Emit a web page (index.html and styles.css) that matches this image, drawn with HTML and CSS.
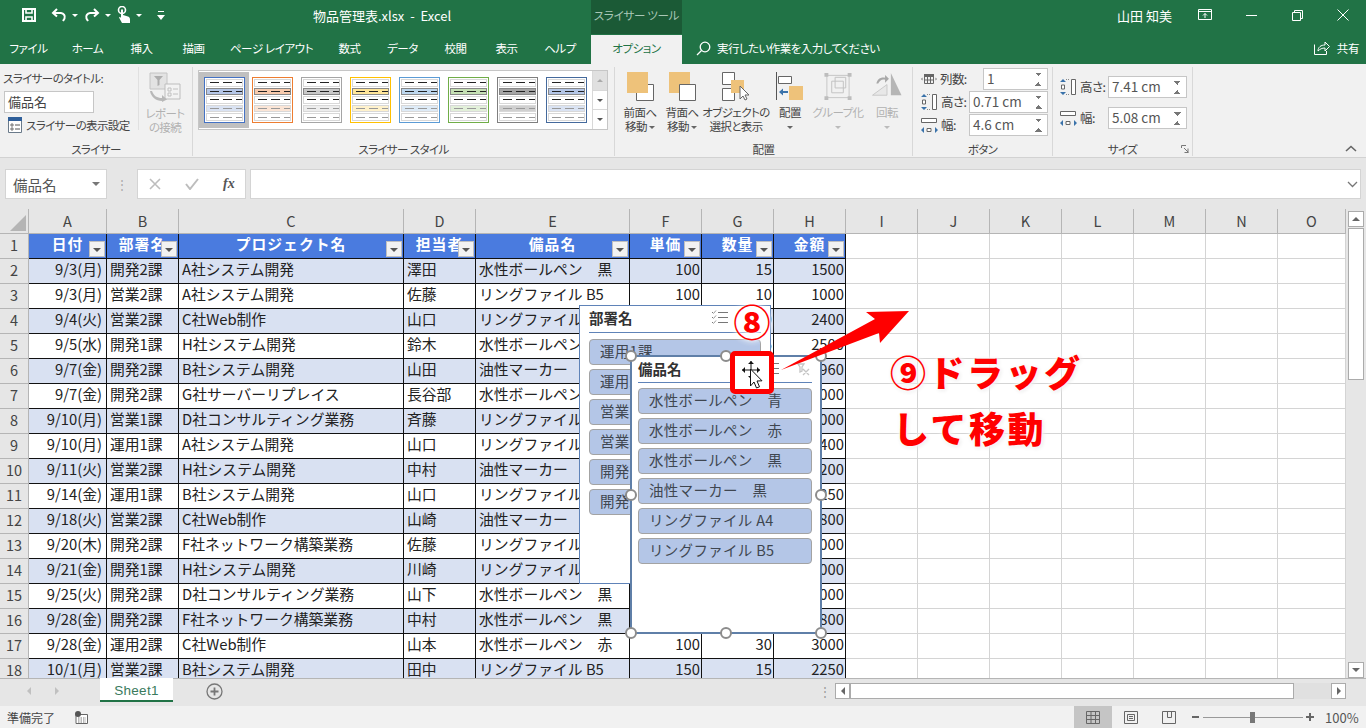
FILE: index.html
```html
<!DOCTYPE html>
<html lang="ja">
<head>
  <meta charset="UTF-8" />
  <title>物品管理表.xlsx - Excel</title>
  <link rel="stylesheet" href="styles.css">
</head>
<body>

  <!-- Title bar -->
  <header class="titlebar">
    <div class="qat">
      <svg class="q-save" width="16" height="16" viewBox="0 0 16 16" fill="none" stroke="#fff" stroke-width="2"><path d="M2 2h12v12H2z"/><path d="M5 2v4h6V2M5 14V10h6v4" stroke-width="1.6"/></svg>
      <svg class="q-undo" width="16" height="14" viewBox="0 0 16 14" fill="none" stroke="#fff" stroke-width="2"><path d="M6 1 2 5l4 3.500"/><path d="M2.500 5H10a4 4 0 0 1 3.500 5.500L12 13"/></svg>
      <i class="q-drop"></i>
      <svg class="q-redo" width="16" height="14" viewBox="0 0 16 14" fill="none" stroke="#fff" stroke-width="2"><path d="M10 1l4 4-4 3.500"/><path d="M13.500 5H6a4 4 0 0 0-3.500 5.500L4 13"/></svg>
      <i class="q-drop"></i>
      <svg class="q-touch" width="14" height="18" viewBox="0 0 14 18" fill="#fff"><circle cx="5" cy="4" r="3.500" fill="none" stroke="#fff" stroke-width="1.600"/><path d="M4 3.500h2V9l5 1.500c1.500.5 2 1.500 2 3V17H5L2 11.500l1-.8L4 12z"/></svg>
      <i class="q-drop"></i>
      <svg class="q-more" width="8" height="9" viewBox="0 0 8 9" fill="#fff"><path d="M1 0h6v1H1zM0 4h8L4 9z"/></svg>
    </div>
    <div class="doc-title">物品管理表.xlsx&nbsp; - &nbsp;Excel</div>
    <div class="context-title">スライサー ツール</div>
    <div class="user-name">山田 知美</div>
    <div class="win-btns">
      <svg width="14" height="12" viewBox="0 0 14 12" fill="none" stroke="#fff"><path d="M.5.500h13v10H.5zM.5 2.500h13M7 9V4.500M5 6.500l2-2 2 2"/></svg>
      <svg width="11" height="12" viewBox="0 0 11 12" fill="none" stroke="#fff"><path d="M0 6.500h11"/></svg>
      <svg width="11" height="11" viewBox="0 0 11 11" fill="none" stroke="#fff"><path d="M.5 2.500h8v8h-8zM2.500 2.500v-2h8v8h-2"/></svg>
      <svg width="12" height="12" viewBox="0 0 12 12" fill="none" stroke="#fff"><path d="M.5.500l11 11M11.500.500l-11 11"/></svg>
    </div>
  </header>

  <!-- Ribbon tabs -->
  <nav class="tabs">
    <span class="tab t-file">ファイル</span>
    <span class="tab t-home">ホーム</span>
    <span class="tab t-ins">挿入</span>
    <span class="tab t-draw">描画</span>
    <span class="tab t-page">ページ レイアウト</span>
    <span class="tab t-calc">数式</span>
    <span class="tab t-data">データ</span>
    <span class="tab t-rev">校閲</span>
    <span class="tab t-view">表示</span>
    <span class="tab t-help">ヘルプ</span>
    <span class="tab tab-active">オプション</span>
    <div class="tell-me">
      <svg width="15" height="15" viewBox="0 0 15 15" fill="none" stroke="#fff" stroke-width="1.300"><circle cx="9" cy="6" r="4.800"/><path d="M5.500 9.500 1 14"/></svg>
      <span>実行したい作業を入力してください</span>
    </div>
    <div class="share">
      <svg width="16" height="14" viewBox="0 0 16 14" fill="none" stroke="#fff"><path d="M.5 3.500v10h12V10M4 10c0-4 3-6 7-6V1l4.500 4.500L11 10V7C8 7 6 8 4 10z"/></svg>
      <span>共有</span>
    </div>
  </nav>

  <!-- Ribbon -->
  <section class="ribbon">
    <div class="rgroup g-slicer">
      <div class="rbody">
        <div class="caption-col">
          <div class="cap-label">スライサーのタイトル:</div>
          <div class="cap-input">備品名</div>
          <div class="cap-setting">
            <svg width="14" height="16" viewBox="0 0 14 16" fill="none"><path d="M.5.500h13v15H.5z" fill="#fff" stroke="#6a7a8a"/><path d="M0 0h14v4H0z" fill="#2f5f9a"/><path d="M3 7h2v2H3zM3 11h2v2H3z" stroke="#555" stroke-width=".8"/><path d="M7 8h5M7 12h5" stroke="#555"/></svg>
            <span>スライサーの表示設定</span>
          </div>
        </div>
        <div class="report-btn">
          <svg width="32" height="30" viewBox="0 0 32 30" fill="none"><path d="M1 1h17v16H1z" fill="#e3e3e3" stroke="#c4c4c4"/><path d="M5 4h9l-3.500 4v5l-2 1V8z" fill="#adadad"/><path d="M16 12h15v15H16z" fill="#f3f3f3" stroke="#bdbdbd"/><path d="M19 16h3v3h-3zM19 21h3v3h-3zM24 17h5M24 22h5" stroke="#c0c0c0"/><path d="M3 19c2 5 5 7 10 7v-3l5 4.500-5 2.500v-1C7 29 2 25 1 19z" fill="#b8b8b8"/></svg>
          <span>レポート<br>の接続</span>
        </div>
      </div>
      <div class="rlabel">スライサー</div>
    </div>

    <div class="rgroup g-style">
      <div class="rbody">
        <div class="gallery">
          <div class="gallery-items">
            <div class="thumb-sel"><div class="thumb th-blue"><span></span><span class="fill"></span><span></span><span class="pale"></span><span class="last"></span></div></div>
            <div class="thumb th-orange"><span></span><span class="fill"></span><span></span><span class="pale"></span><span class="last"></span></div>
            <div class="thumb th-gray"><span></span><span class="fill"></span><span></span><span class="pale"></span><span class="last"></span></div>
            <div class="thumb th-yellow"><span></span><span class="fill"></span><span></span><span class="pale"></span><span class="last"></span></div>
            <div class="thumb th-sky"><span></span><span class="fill"></span><span></span><span class="pale"></span><span class="last"></span></div>
            <div class="thumb th-green"><span></span><span class="fill"></span><span></span><span class="pale"></span><span class="last"></span></div>
            <div class="thumb th-dark"><span></span><span class="fill"></span><span></span><span class="pale"></span><span class="last"></span></div>
            <div class="thumb th-navy"><span></span><span class="fill"></span><span></span><span class="pale"></span><span class="last"></span></div>
          </div>
          <div class="gallery-scroll">
            <b class="gs-up"><i></i></b>
            <b><i></i></b>
            <b class="gs-more"><i></i></b>
          </div>
        </div>
      </div>
      <div class="rlabel">スライサー スタイル</div>
    </div>

    <div class="rgroup g-arrange">
      <div class="rbody">
        <div class="rbtn w42">
          <svg width="27" height="29" viewBox="0 0 27 29"><path d="M9.500 12.500h17v16h-17z" fill="#fff" stroke="#666"/><path d="M0 0h21v21H0z" fill="#eec27a"/></svg>
          <span>前面へ<br>移動 <i class="drop"></i></span>
        </div>
        <div class="rbtn w42">
          <svg width="27" height="29" viewBox="0 0 27 29"><path d="M0 0h21v21H0z" fill="#eec27a"/><path d="M10.500 12.500h16v16h-16z" fill="#fff" stroke="#666"/></svg>
          <span>背面へ<br>移動 <i class="drop"></i></span>
        </div>
        <div class="rbtn w66">
          <svg width="28" height="29" viewBox="0 0 28 29"><path d="M.5.500h12v12H.5zM.5 16.500h12v12H.5z" fill="#fff" stroke="#666"/><path d="M9 8h13v13H9z" fill="#eec27a"/><path d="M18 14v13l3-3 2 4 2-1-2-4h4z" fill="#fff" stroke="#666"/></svg>
          <span>オブジェクトの<br>選択と表示</span>
        </div>
        <div class="rbtn w42">
          <svg width="28" height="29" viewBox="0 0 28 29"><path d="M.5 0v28" stroke="#555"/><path d="M2.500 4.500h13v7h-13z" fill="#fff" stroke="#666"/><path d="M13 14h14v14H13z" fill="#eec27a"/><path d="M3 20l4-3.500V19h5v2H7v2.500z" fill="#3a72aa"/></svg>
          <span>配置<br><i class="drop"></i></span>
        </div>
        <div class="rbtn w54 off">
          <svg width="30" height="29" viewBox="0 0 30 30" fill="none" stroke="#c6c6c6"><path d="M3.500 3.500h23v23h-23z"/><path d="M8.500 9.500h12v12h-12zM12 5.500h11v11H12z" stroke="#c2c2c2"/><path d="M1 1h4v4H1zM25 1h4v4h-4zM1 25h4v4H1zM25 25h4v4h-4z" fill="#bdbdbd" stroke="none"/></svg>
          <span>グループ化<br><i class="drop"></i></span>
        </div>
        <div class="rbtn w44 off">
          <svg width="32" height="29" viewBox="0 0 32 30"><path d="M1 24 16 13v11z" fill="#e8e8e8" stroke="#c8c8c8"/><path d="M20 1l11 23H20z" fill="#b5b5b5"/><path d="M5 12c1-5 5-7 9-6V3l4 4-4 4V8c-3-1-6 1-7 4z" fill="#a8a8a8"/></svg>
          <span>回転<br><i class="drop"></i></span>
        </div>
      </div>
      <div class="rlabel">配置</div>
    </div>

    <div class="rgroup g-button">
      <div class="rbody field-rows">
        <div class="field f-cols">
          <svg width="16" height="10" viewBox="0 0 16 10" fill="none"><path d="M0 5l1.500-1.500v3zM16 5l-1.500-1.500v3z" fill="#777"/><path d="M3.500.500h9v9h-9z" stroke="#666"/><path d="M3 0h10v3H3z" fill="#666"/><path d="M6.500 3v6M9.500 3v6M3 6h10" stroke="#666"/></svg>
          <label>列数:</label>
          <div class="spin s-cols"><span>1</span><em></em></div>
        </div>
        <div class="field">
          <svg class="ic-h" width="17" height="16" viewBox="0 0 17 16"><path d="M11.500.500h4v15h-4z" fill="#fff" stroke="#666"/><path d="M3 0l3 3H0zM3 16l3-3H0z" fill="#3a72aa"/><path d="M1.500 6h3v4h-3z" fill="#fff" stroke="#666"/><path d="M6 .500h4M6 15.500h4" stroke="#888" stroke-dasharray="1 1"/></svg>
          <label>高さ:</label>
          <div class="spin"><span>0.71 cm</span><em></em></div>
        </div>
        <div class="field">
          <svg class="ic-w" width="17" height="15" viewBox="0 0 17 15"><path d="M.5.500h15v4h-15z" fill="#fff" stroke="#666"/><path d="M0 12l3-3v6zM17 12l-3-3v6z" fill="#3a72aa"/><path d="M6 10.500h4v3H6z" fill="#fff" stroke="#666"/></svg>
          <label>幅:</label>
          <div class="spin"><span>4.6 cm</span><em></em></div>
        </div>
      </div>
      <div class="rlabel">ボタン</div>
    </div>

    <div class="rgroup g-size">
      <div class="rbody size-rows">
        <div class="field">
          <svg class="ic-h" width="17" height="16" viewBox="0 0 17 16"><path d="M11.500.500h4v15h-4z" fill="#fff" stroke="#666"/><path d="M3 0l3 3H0zM3 16l3-3H0z" fill="#3a72aa"/><path d="M1.500 6h3v4h-3z" fill="#fff" stroke="#666"/><path d="M6 .500h4M6 15.500h4" stroke="#888" stroke-dasharray="1 1"/></svg>
          <label>高さ:</label>
          <div class="spin"><span>7.41 cm</span><em></em></div>
        </div>
        <div class="field">
          <svg class="ic-w" width="17" height="15" viewBox="0 0 17 15"><path d="M.5.500h15v4h-15z" fill="#fff" stroke="#666"/><path d="M0 12l3-3v6zM17 12l-3-3v6z" fill="#3a72aa"/><path d="M6 10.500h4v3H6z" fill="#fff" stroke="#666"/></svg>
          <label>幅:</label>
          <div class="spin"><span>5.08 cm</span><em></em></div>
        </div>
      </div>
      <div class="rlabel">サイズ
        <svg class="launcher" width="8" height="8" viewBox="0 0 8 8" fill="none" stroke="#777"><path d="M.5 3V.5H5M7.500 7.500 3 3M7 3.500V7.500H3.500"/></svg>
      </div>
    </div>

    <svg class="collapse" width="12" height="7" viewBox="0 0 12 7" fill="none" stroke="#666" stroke-width="1.600"><path d="M1 6l5-4.500L11 6"/></svg>
  </section>

  <!-- Formula bar -->
  <section class="formula">
    <div class="name-box"><span>備品名</span><i></i></div>
    <div class="fx-grip">⋮</div>
    <div class="fx-btns">
      <svg width="12" height="12" viewBox="0 0 12 12" fill="none" stroke="#bdbdbd" stroke-width="1.600"><path d="M1 1l10 10M11 1 1 11"/></svg>
      <svg width="14" height="12" viewBox="0 0 14 12" fill="none" stroke="#bdbdbd" stroke-width="2"><path d="M1 6l4 5 8-10"/></svg>
      <em>fx</em>
    </div>
    <div class="fx-input"><svg width="11" height="7" viewBox="0 0 11 7" fill="none" stroke="#777" stroke-width="1.300"><path d="M1 1l4.500 4.500L10 1"/></svg></div>
  </section>

  <!-- Sheet -->
  <main class="sheet">
    <div class="grid">
      <table class="cells">
        <colgroup>
          <col class="c-rh"><col class="c-a"><col class="c-n"><col class="c-c"><col class="c-n"><col class="c-e"><col class="c-n"><col class="c-n"><col class="c-n"><col class="c-n"><col class="c-n"><col class="c-n"><col class="c-n"><col class="c-n"><col class="c-n"><col class="c-o">
        </colgroup>
        <thead>
          <tr><th class="corner"><i></i></th><th>A</th><th>B</th><th>C</th><th>D</th><th>E</th><th>F</th><th>G</th><th>H</th><th>I</th><th>J</th><th>K</th><th>L</th><th>M</th><th>N</th><th>O</th></tr>
        </thead>
        <tbody>
          <tr class="head"><th>1</th><td>日付<i></i></td><td>部署名<i></i></td><td>プロジェクト名<i></i></td><td>担当者<i></i></td><td>備品名<i></i></td><td>単価<i></i></td><td>数量<i></i></td><td>金額<i></i></td><td class="e"></td><td class="e"></td><td class="e"></td><td class="e"></td><td class="e"></td><td class="e"></td><td class="e"></td></tr>
          <tr class="odd"><th>2</th><td class="d">9/3(月)</td><td>開発2課</td><td>A社システム開発</td><td>澤田</td><td>水性ボールペン　黒</td><td class="r">100</td><td class="r">15</td><td class="r">1500</td><td class="e"></td><td class="e"></td><td class="e"></td><td class="e"></td><td class="e"></td><td class="e"></td><td class="e"></td></tr>
          <tr><th>3</th><td class="d">9/3(月)</td><td>営業2課</td><td>A社システム開発</td><td>佐藤</td><td>リングファイル B5</td><td class="r">100</td><td class="r">10</td><td class="r">1000</td><td class="e"></td><td class="e"></td><td class="e"></td><td class="e"></td><td class="e"></td><td class="e"></td><td class="e"></td></tr>
          <tr class="odd"><th>4</th><td class="d">9/4(火)</td><td>営業2課</td><td>C社Web制作</td><td>山口</td><td>リングファイル A4</td><td class="r">120</td><td class="r">20</td><td class="r">2400</td><td class="e"></td><td class="e"></td><td class="e"></td><td class="e"></td><td class="e"></td><td class="e"></td><td class="e"></td></tr>
          <tr><th>5</th><td class="d">9/5(水)</td><td>開発1課</td><td>H社システム開発</td><td>鈴木</td><td>水性ボールペン　青</td><td class="r">100</td><td class="r">25</td><td class="r">2500</td><td class="e"></td><td class="e"></td><td class="e"></td><td class="e"></td><td class="e"></td><td class="e"></td><td class="e"></td></tr>
          <tr class="odd"><th>6</th><td class="d">9/7(金)</td><td>開発2課</td><td>B社システム開発</td><td>山田</td><td>油性マーカー　黒</td><td class="r">120</td><td class="r">8</td><td class="r">960</td><td class="e"></td><td class="e"></td><td class="e"></td><td class="e"></td><td class="e"></td><td class="e"></td><td class="e"></td></tr>
          <tr><th>7</th><td class="d">9/7(金)</td><td>開発2課</td><td>G社サーバーリプレイス</td><td>長谷部</td><td>水性ボールペン　赤</td><td class="r">100</td><td class="r">30</td><td class="r">3000</td><td class="e"></td><td class="e"></td><td class="e"></td><td class="e"></td><td class="e"></td><td class="e"></td><td class="e"></td></tr>
          <tr class="odd"><th>8</th><td class="d">9/10(月)</td><td>営業1課</td><td>D社コンサルティング業務</td><td>斉藤</td><td>リングファイル A4</td><td class="r">100</td><td class="r">20</td><td class="r">2000</td><td class="e"></td><td class="e"></td><td class="e"></td><td class="e"></td><td class="e"></td><td class="e"></td><td class="e"></td></tr>
          <tr><th>9</th><td class="d">9/10(月)</td><td>運用1課</td><td>A社システム開発</td><td>山口</td><td>リングファイル B5</td><td class="r">120</td><td class="r">20</td><td class="r">2400</td><td class="e"></td><td class="e"></td><td class="e"></td><td class="e"></td><td class="e"></td><td class="e"></td><td class="e"></td></tr>
          <tr class="odd"><th>10</th><td class="d">9/11(火)</td><td>営業2課</td><td>H社システム開発</td><td>中村</td><td>油性マーカー　黒</td><td class="r">120</td><td class="r">10</td><td class="r">1200</td><td class="e"></td><td class="e"></td><td class="e"></td><td class="e"></td><td class="e"></td><td class="e"></td><td class="e"></td></tr>
          <tr><th>11</th><td class="d">9/14(金)</td><td>運用1課</td><td>B社システム開発</td><td>山口</td><td>リングファイル A4</td><td class="r">150</td><td class="r">15</td><td class="r">2250</td><td class="e"></td><td class="e"></td><td class="e"></td><td class="e"></td><td class="e"></td><td class="e"></td><td class="e"></td></tr>
          <tr class="odd"><th>12</th><td class="d">9/18(火)</td><td>営業2課</td><td>C社Web制作</td><td>山崎</td><td>油性マーカー　黒</td><td class="r">120</td><td class="r">15</td><td class="r">1800</td><td class="e"></td><td class="e"></td><td class="e"></td><td class="e"></td><td class="e"></td><td class="e"></td><td class="e"></td></tr>
          <tr><th>13</th><td class="d">9/20(木)</td><td>開発2課</td><td>F社ネットワーク構築業務</td><td>佐藤</td><td>リングファイル B5</td><td class="r">100</td><td class="r">20</td><td class="r">2000</td><td class="e"></td><td class="e"></td><td class="e"></td><td class="e"></td><td class="e"></td><td class="e"></td><td class="e"></td></tr>
          <tr class="odd"><th>14</th><td class="d">9/21(金)</td><td>開発1課</td><td>H社システム開発</td><td>川崎</td><td>リングファイル A4</td><td class="r">100</td><td class="r">30</td><td class="r">3000</td><td class="e"></td><td class="e"></td><td class="e"></td><td class="e"></td><td class="e"></td><td class="e"></td><td class="e"></td></tr>
          <tr><th>15</th><td class="d">9/25(火)</td><td>開発2課</td><td>D社コンサルティング業務</td><td>山下</td><td>水性ボールペン　黒</td><td class="r">100</td><td class="r">30</td><td class="r">3000</td><td class="e"></td><td class="e"></td><td class="e"></td><td class="e"></td><td class="e"></td><td class="e"></td><td class="e"></td></tr>
          <tr class="odd"><th>16</th><td class="d">9/28(金)</td><td>開発2課</td><td>F社ネットワーク構築業務</td><td>中村</td><td>水性ボールペン　黒</td><td class="r">120</td><td class="r">15</td><td class="r">1800</td><td class="e"></td><td class="e"></td><td class="e"></td><td class="e"></td><td class="e"></td><td class="e"></td><td class="e"></td></tr>
          <tr><th>17</th><td class="d">9/28(金)</td><td>運用2課</td><td>C社Web制作</td><td>山本</td><td>水性ボールペン　赤</td><td class="r">100</td><td class="r">30</td><td class="r">3000</td><td class="e"></td><td class="e"></td><td class="e"></td><td class="e"></td><td class="e"></td><td class="e"></td><td class="e"></td></tr>
          <tr class="odd"><th>18</th><td class="d">10/1(月)</td><td>営業2課</td><td>B社システム開発</td><td>田中</td><td>リングファイル B5</td><td class="r">150</td><td class="r">15</td><td class="r">2250</td><td class="e"></td><td class="e"></td><td class="e"></td><td class="e"></td><td class="e"></td><td class="e"></td><td class="e"></td></tr>
        </tbody>
      </table>

      <!-- Slicers lying over the cells -->
      <div class="slicer sl-dept">
        <div class="sl-head"><span>部署名</span>
          <svg class="sl-multi" width="17" height="15" viewBox="0 0 17 15" fill="none" stroke="#777"><path d="M1 2l1.500 1.500L5 .5M1 7l1.500 1.500L5 5.500M1 12l1.500 1.500L5 10.500" stroke-dasharray="1.500 .7"/><path d="M7 2.500h10M7 7.500h10M7 12.500h10"/></svg>
        </div>
        <div class="sl-item">運用1課</div>
        <div class="sl-item">運用2課</div>
        <div class="sl-item">営業1課</div>
        <div class="sl-item">営業2課</div>
        <div class="sl-item">開発1課</div>
        <div class="sl-item">開発2課</div>
      </div>

      <div class="slicer sl-item-name">
        <div class="sl-head"><span>備品名</span>
          <svg class="sl-multi2" width="17" height="15" viewBox="0 0 17 15" fill="none" stroke="#777"><path d="M1 2l1.500 1.500L5 .5M1 7l1.500 1.500L5 5.500M1 12l1.500 1.500L5 10.500" stroke-dasharray="1.500 .7"/><path d="M7 2.500h10M7 7.500h10M7 12.500h10"/></svg>
          <svg class="sl-clear" width="13" height="13" viewBox="0 0 13 13" fill="none" stroke="#c4c4c4" stroke-width="1.300"><path d="M1 1h6L5 4v4L3 9V4zM6 6l6 6M12 6l-6 6"/></svg>
        </div>
        <div class="sl-item">水性ボールペン　青</div>
        <div class="sl-item">水性ボールペン　赤</div>
        <div class="sl-item">水性ボールペン　黒</div>
        <div class="sl-item">油性マーカー　黒</div>
        <div class="sl-item">リングファイル A4</div>
        <div class="sl-item">リングファイル B5</div>
        <i class="hd h-tl"></i><i class="hd h-tc"></i><i class="hd h-tr"></i>
        <i class="hd h-ml"></i><i class="hd h-mr"></i>
        <i class="hd h-bl"></i><i class="hd h-bc"></i><i class="hd h-br"></i>
      </div>

      <!-- Callouts -->
      <div class="mark8">⑧</div>
      <svg class="red-arrow" width="132" height="66" viewBox="0 0 132 66"><path d="M2 61 96 10 87 3 130 2 101 34 100 24z" fill="#f00"/></svg>
      <div class="red-box">
        <svg width="34" height="33" viewBox="0 0 34 33">
          <path d="M16 5v18M7 14h18" stroke="#111" fill="none"/>
          <path d="M16 5l3 3h-6zM16 23l3-3h-6zM7 14l3-3v6zM25 14l-3-3v6z" fill="#111"/>
          <path d="M15.500 13v17l3.500-4 2.500 6 3-1.200-2.500-5.800 5-.2z" fill="#fff" stroke="#111"/>
        </svg>
      </div>
      <div class="note note-1">⑨ドラッグ</div>
      <div class="note note-2">して移動</div>
    </div>

    <aside class="vscroll">
      <b class="vs-btn"><i class="up"></i></b>
      <div class="vs-track"><div class="vs-thumb"></div></div>
      <b class="vs-btn"><i class="down"></i></b>
    </aside>
  </main>

  <!-- Sheet tabs -->
  <section class="tabbar">
    <div class="sheet-nav"><i class="left"></i><i class="right"></i></div>
    <div class="sheet-tab">Sheet1</div>
    <div class="sheet-add">
      <svg width="17" height="17" viewBox="0 0 17 17" fill="none" stroke="#777"><circle cx="8.500" cy="8.500" r="7.500" stroke-width="1.300"/><path d="M8.500 4.500v8M4.500 8.500h8" stroke-width="1.800"/></svg>
    </div>
    <div class="h-dots">⋮</div>
    <div class="hscroll">
      <b class="hs-btn"><i class="left"></i></b>
      <div class="hs-track"><div class="hs-thumb"></div></div>
      <b class="hs-btn"><i class="right"></i></b>
    </div>
  </section>

  <!-- Status bar -->
  <footer class="status">
    <span class="ready">準備完了</span>
    <svg class="macro" width="13" height="13" viewBox="0 0 13 13" fill="none"><path d="M1 3.500h11.500v9H1z" fill="#fff" stroke="#666"/><circle cx="3" cy="3" r="3" fill="#555"/><path d="M3 7h8M3 9h8M3 11h8" stroke="#777" stroke-dasharray="1.500 1"/></svg>
    <div class="views">
      <div class="view view-on"><svg width="14" height="13" viewBox="0 0 14 13" fill="none" stroke="#666"><path d="M.5.500h13v12H.5zM.5 4.500h13M.5 8.500h13M5 .5v12M9.500.5v12"/></svg></div>
      <div class="view"><svg width="14" height="13" viewBox="0 0 14 13" fill="none" stroke="#666"><path d="M.5.500h13v12H.5zM3.500 3.500h7v6h-7zM5 5.500h4M5 7.500h4"/></svg></div>
      <div class="view"><svg width="14" height="13" viewBox="0 0 14 13" fill="none" stroke="#666"><path d="M.5.500h13v12H.5zM5.500.5v6h4v-6"/></svg></div>
    </div>
    <div class="zoom-ctl">
      <i class="z-minus"></i>
      <div class="z-track"><i class="z-knob"></i></div>
      <i class="z-plus"></i>
    </div>
    <span class="zoom-val">100%</span>
  </footer>

</body>
</html>
```

FILE: styles.css
```css
* {
  margin: 0;
  padding: 0;
  box-sizing: border-box;
}

html, body {
  width: 1366px;
  height: 728px;
  overflow: hidden;
  font-family: "Noto Sans CJK JP", "Noto Sans", sans-serif;
  font-size: 12px;
  color: #444;
  background: #f1f1f1;
}

body {
  display: flex;
  flex-direction: column;
}

i {
  font-style: normal;
}

/* Title bar */
.titlebar {
  height: 35px;
  flex: none;
  display: flex;
  align-items: center;
  padding-bottom: 5px;
  background: #217346;
  color: #fff;
  font-feature-settings: "palt";
}

.qat {
  width: 313px;
  flex: none;
  display: flex;
  align-items: center;
  padding-left: 21px;
}

.q-undo { margin-left: 14px; }
.q-redo { margin-left: 6px; }
.q-touch { margin-left: 6px; }
.q-more { margin-left: 15px; }

.q-drop {
  margin-left: 5px;
  border-left: 3px solid transparent;
  border-right: 3px solid transparent;
  border-top: 3px solid #fff;
}

.doc-title {
  width: 278px;
  font-size: 13px;
}

.context-title {
  width: 91px;
  height: 34px;
  align-self: flex-start;
  background: #1b5a36;
  color: #a9c7b6;
  font-size: 11.500px;
  letter-spacing: -.3px;
  text-align: center;
  line-height: 31px;
  white-space: nowrap;
}

.user-name {
  margin-left: auto;
  font-size: 13px;
}

.win-btns {
  width: 194px;
  display: flex;
  align-items: center;
  justify-content: space-between;
  padding: 0 17px 0 26px;
}

/* Ribbon tabs */
.tabs {
  height: 29px;
  flex: none;
  display: flex;
  align-items: center;
  background: #217346;
  color: #fff;
  font-size: 11.500px;
  letter-spacing: -.4px;
  font-feature-settings: "palt";
}

.tab {
  text-align: center;
  line-height: 26px;
  height: 29px;
  white-space: nowrap;
}

.t-file { width: 57px; }
.t-home { width: 61px; }
.t-ins { width: 47px; }
.t-draw { width: 57px; }
.t-page { width: 99px; }
.t-calc { width: 57px; }
.t-data { width: 49px; }
.t-rev { width: 57px; }
.t-view { width: 45px; }
.t-help { width: 62px; }

.tab-active {
  width: 91px;
  background: #f1f1f1;
  color: #217346;
}

.tell-me {
  display: flex;
  align-items: center;
  gap: 6px;
  height: 26px;
  margin: 0 0 3px 14px;
  color: #fff;
  letter-spacing: -.55px;
}

.share {
  margin: 0 7px 3px auto;
  display: flex;
  align-items: center;
  gap: 7px;
}

/* Ribbon */
.ribbon {
  height: 94px;
  flex: none;
  position: relative;
  display: flex;
  background: #f1f1f1;
  border-bottom: 1px solid #d2d2d2;
  font-size: 11.500px;
  letter-spacing: -.6px;
  font-feature-settings: "palt";
}

.rgroup {
  display: flex;
  flex-direction: column;
  position: relative;
  height: 89px;
  margin-top: 3px;
  border-right: 1px solid #d8d8d8;
}

.rbody {
  height: 73px;
  flex: none;
  display: flex;
}

.rlabel {
  height: 16px;
  text-align: center;
  line-height: 18px;
  color: #444;
}

.g-slicer { width: 193px; }
.g-style { width: 422px; }
.g-arrange { width: 298px; }
.g-button { width: 140px; }
.g-size { width: 140px; }

.caption-col {
  width: 139px;
  padding: 2px 0 0 3px;
  border-right: 1px solid #e0e0e0;
  margin-bottom: 10px;
  white-space: nowrap;
}

.cap-label {
  height: 22px;
  line-height: 18px;
}

.cap-input {
  width: 90px;
  height: 22px;
  margin-left: 1px;
  padding-left: 3px;
  background: #fff;
  border: 1px solid #c6c6c6;
  font-size: 13px;
  letter-spacing: 0;
  line-height: 19px;
}

.cap-setting {
  display: flex;
  align-items: center;
  gap: 4px;
  margin: 4px 0 0 5px;
}

.report-btn {
  width: 52px;
  display: flex;
  flex-direction: column;
  align-items: center;
  padding-top: 5px;
  color: #b1b1b1;
  text-align: center;
  line-height: 14px;
}

.report-btn span {
  margin-top: 4px;
}

/* Style gallery */
.gallery {
  margin: 3px 0 0 5px;
  width: 410px;
  height: 60px;
  display: flex;
  background: #fff;
  border: 1px solid #c6c6c6;
}

.gallery-items {
  flex: 1;
  display: flex;
  align-items: center;
  gap: 8px;
  padding-left: 4px;
}

.thumb-sel {
  width: 50px;
  height: 56px;
  margin: 0 -5px 0 -4px;
  display: flex;
  align-items: center;
  justify-content: center;
  background: #c0c0c0;
}

.thumb {
  --c: #4472c4;
  --f: #b4c6e7;
  --p: #dae3f3;
  width: 41px;
  height: 46px;
  flex: none;
  display: flex;
  flex-direction: column;
  gap: 1px;
  padding: 1px;
  background: #fff;
  border: 1px solid var(--c);
}

.thumb span {
  flex: 1;
  border: 1px solid #d8d8d8;
  background: linear-gradient(to right, #222 0 9px, transparent 9px 13px) 3px center / 13px 1px repeat-x;
}

.thumb span.fill {
  border-color: #888;
  background: linear-gradient(to right, #222 0 9px, transparent 9px 13px) 3px center / 13px 1px repeat-x, var(--f);
}

.thumb span.pale {
  background: linear-gradient(to right, #999 0 9px, transparent 9px 13px) 3px center / 13px 1px repeat-x, var(--p);
}

.thumb span.last {
  background: linear-gradient(to right, #999 0 9px, transparent 9px 13px) 3px center / 13px 1px repeat-x;
}

.th-orange { --c: #ed7d31; --f: #f8cbad; --p: #fbe5d6; }
.th-gray { --c: #a5a5a5; --f: #c9c9c9; --p: #ededed; }
.th-yellow { --c: #ffc000; --f: #ffe699; --p: #fff2cc; }
.th-sky { --c: #5b9bd5; --f: #bdd7ee; --p: #deebf7; }
.th-green { --c: #70ad47; --f: #c5e0b4; --p: #e2f0d9; }
.th-dark { --c: #7f7f7f; --f: #a5a5a5; --p: #d0d0d0; }
.th-navy { --c: #44699c; --f: #b4c6e7; --p: #dae3f3; }

.gallery-scroll {
  width: 15px;
  display: flex;
  flex-direction: column;
  border-left: 1px solid #d8d8d8;
}

.gallery-scroll b {
  flex: 1;
  display: flex;
  align-items: center;
  justify-content: center;
  border-bottom: 1px solid #d8d8d8;
}

.gallery-scroll b:last-child {
  border-bottom: 0;
}

.gallery-scroll i {
  border-left: 3px solid transparent;
  border-right: 3px solid transparent;
  border-top: 3px solid #555;
}

.gs-up {
  background: #e0e0e0;
}

.gallery-scroll .gs-up i {
  border-top: 0;
  border-bottom: 3px solid #aaa;
}

/* Arrange buttons */
.g-arrange .rbody {
  padding: 5px 0 0 4px;
}

.rbtn {
  display: flex;
  flex-direction: column;
  align-items: center;
  text-align: center;
  line-height: 14px;
  white-space: nowrap;
}

.rbtn svg {
  height: 29px;
  flex: none;
}

.rbtn span {
  margin-top: 4px;
}

.w42 { width: 42px; }
.w44 { width: 44px; }
.w54 { width: 54px; }
.w66 { width: 66px; }

.off {
  color: #b1b1b1;
}

.drop {
  display: inline-block;
  vertical-align: middle;
  border-left: 3px solid transparent;
  border-right: 3px solid transparent;
  border-top: 3px solid #666;
}

.off .drop {
  border-top-color: #bbb;
}

/* Number fields */
.field-rows {
  flex-direction: column;
  gap: 1px;
  padding: 1px 4px 0 8px;
}

.size-rows {
  flex-direction: column;
  gap: 9px;
  padding: 9px 5px 0 7px;
}

.field {
  height: 22px;
  display: flex;
  align-items: center;
  font-size: 12.500px;
  white-space: nowrap;
}

.field label {
  margin-left: 3px;
  padding-bottom: 2px;
}

.spin {
  width: 79px;
  height: 22px;
  margin-left: auto;
  display: flex;
  align-items: center;
  justify-content: space-between;
  padding: 0 5px 2px 3px;
  background: #fff;
  border: 1px solid #c6c6c6;
  font-size: 13.500px;
  letter-spacing: 0;
  color: #555;
}

.s-cols {
  width: 65px;
}

.spin em {
  width: 7px;
  height: 13px;
  margin-top: 2px;
  background:
    linear-gradient(45deg, transparent 50%, #777 50%) 0 0 / 4px 4px no-repeat,
    linear-gradient(-45deg, transparent 50%, #777 50%) 3px 0 / 4px 4px no-repeat,
    linear-gradient(135deg, transparent 50%, #777 50%) 0 9px / 4px 4px no-repeat,
    linear-gradient(-135deg, transparent 50%, #777 50%) 3px 9px / 4px 4px no-repeat;
}

.launcher {
  position: absolute;
  right: 3px;
  bottom: 3px;
}

.collapse {
  position: absolute;
  right: 9px;
  bottom: 5px;
}

/* Formula bar */
.formula {
  height: 51px;
  flex: none;
  display: flex;
  align-items: flex-start;
  padding: 11px 5px 0 5px;
  background: #e6e6e6;
}

.name-box {
  width: 102px;
  height: 30px;
  display: flex;
  align-items: center;
  justify-content: space-between;
  padding: 0 6px 0 7px;
  background: #fff;
  border: 1px solid #d4d4d4;
  font-size: 14.500px;
  color: #555;
}

.name-box i {
  border-left: 4px solid transparent;
  border-right: 4px solid transparent;
  border-top: 4px solid #777;
}

.fx-grip {
  width: 30px;
  height: 30px;
  text-align: center;
  line-height: 30px;
  color: #aaa;
}

.fx-btns {
  width: 109px;
  height: 30px;
  display: flex;
  align-items: center;
  gap: 24px;
  padding-left: 11px;
  background: #fff;
  border: 1px solid #d4d4d4;
}

.fx-btns em {
  font-family: "Liberation Serif", serif;
  font-size: 14px;
  font-weight: 700;
  color: #555;
}

.fx-input {
  flex: 1;
  height: 30px;
  margin-left: 4px;
  display: flex;
  align-items: center;
  justify-content: flex-end;
  padding-right: 2px;
  background: #fff;
  border: 1px solid #d4d4d4;
}

/* Sheet */
.sheet {
  height: 470px;
  flex: none;
  display: flex;
  background: #e6e6e6;
  border-bottom: 1px solid #b5b5b5;
}

.grid {
  width: 1346px;
  position: relative;
  overflow: hidden;
  background: #fff;
}

.cells {
  width: 1346px;
  table-layout: fixed;
  border-collapse: separate;
  border-spacing: 0;
  font-size: 14.800px;
  color: #222;
}

.c-rh { width: 29px; }
.c-a { width: 78px; }
.c-n { width: 72px; }
.c-c { width: 225px; }
.c-e { width: 154px; }
.c-o { width: 68px; }

.cells tr {
  height: 25px;
}

.cells th {
  height: 25px;
  padding-bottom: 1px;
  background: #e6e6e6;
  border-right: 1px solid #b5b5b5;
  border-bottom: 1px solid #b5b5b5;
  font-weight: 400;
  font-size: 14.500px;
  line-height: 21px;
  color: #444;
  position: relative;
}

.cells tbody th {
  padding-bottom: 3px;
}

.corner i {
  position: absolute;
  right: 2px;
  bottom: 2px;
  border-left: 16px solid transparent;
  border-bottom: 16px solid #b5b5b5;
}

.cells td {
  height: 25px;
  padding: 0 3px 4px 3px;
  border-right: 1px solid #111;
  border-bottom: 1px solid #111;
  line-height: 20px;
  white-space: nowrap;
  overflow: hidden;
}

.cells td.r {
  padding-right: 1px;
  text-align: right;
}

.cells td.d {
  padding-right: 4px;
  text-align: right;
}

.cells td.e {
  border-right: 1px solid #d4d4d4;
  border-bottom: 1px solid #d4d4d4;
  background: #fff;
}

.odd td {
  background: #d9e1f2;
}

.head td {
  position: relative;
  background: #4a7bdf;
  color: #fff;
  font-weight: 700;
  text-align: center;
  letter-spacing: 1px;
  border-right-color: #111;
  border-bottom-color: #111;
}

.head td i {
  position: absolute;
  right: 1px;
  bottom: 1px;
  width: 16px;
  height: 16px;
  background: #f2f2f2;
  border: 1px solid #c0c0c0;
}

.head td i::after {
  content: "";
  position: absolute;
  left: 3px;
  top: 6px;
  border-left: 4px solid transparent;
  border-right: 4px solid transparent;
  border-top: 4px solid #555;
}

/* Slicers */
.slicer {
  position: absolute;
  background: #fff;
  border: 1px solid #5f83b8;
  width: 192px;
  height: 279px;
  padding: 0 9px;
}

.sl-dept {
  left: 579px;
  top: 96px;
}

.sl-item-name {
  left: 630px;
  top: 146px;
  border: 2px solid #5f7fa8;
  padding: 0 8px 0 6px;
}

.sl-head {
  height: 27px;
  margin-bottom: 6px;
  padding-bottom: 3px;
  display: flex;
  align-items: center;
  justify-content: space-between;
  border-bottom: 1px solid #5f83b8;
  font-size: 14.500px;
  font-weight: 700;
  color: #333;
  position: relative;
}

.sl-item-name .sl-head {
  height: 26px;
  margin-bottom: 5px;
}

.sl-multi {
  margin-right: 33px;
}

.sl-multi2 {
  position: absolute;
  left: 124px;
  top: 4px;
}

.sl-clear {
  position: absolute;
  right: 2px;
  top: 6px;
}

.sl-item {
  height: 26px;
  margin-bottom: 4px;
  padding-left: 10px;
  background: #b4c6e7;
  border: 1px solid #a3a3a3;
  border-radius: 4px;
  font-size: 14.500px;
  line-height: 22px;
  color: #3f4650;
  letter-spacing: .3px;
  white-space: nowrap;
}

.hd {
  position: absolute;
  width: 12px;
  height: 12px;
  background: #fff;
  border: 2px solid #8c8c8c;
  border-radius: 50%;
}

.h-tl { left: -7px; top: -7px; }
.h-tc { left: 88px; top: -7px; }
.h-tr { right: -7px; top: -7px; }
.h-ml { left: -7px; top: 132px; }
.h-mr { right: -7px; top: 132px; }
.h-bl { left: -7px; bottom: -7px; }
.h-bc { left: 88px; bottom: -7px; }
.h-br { right: -7px; bottom: -7px; }

/* Callouts */
.mark8 {
  position: absolute;
  left: 731px;
  top: 88px;
  width: 42px;
  height: 48px;
  text-align: center;
  font-size: 37px;
  line-height: 48px;
  font-weight: 900;
  color: #f00;
  text-shadow: 0 0 3px #fff, 0 0 6px #fff, 0 0 6px #fff;
}

.red-arrow {
  position: absolute;
  left: 779px;
  top: 100px;
}

.red-box {
  position: absolute;
  left: 730px;
  top: 142px;
  width: 44px;
  height: 43px;
  display: flex;
  align-items: center;
  justify-content: center;
  background: #fff;
  border: 5px solid #f00;
  border-radius: 5px;
}

.note {
  position: absolute;
  font-size: 36px;
  line-height: 46px;
  font-weight: 900;
  letter-spacing: 2.500px;
  color: #f00;
  white-space: nowrap;
  text-shadow: 0 0 3px #fff, 0 0 6px #fff, 1px 1px 4px #ddd;
}

.note-1 {
  left: 890px;
  top: 139px;
}

.note-2 {
  left: 893px;
  top: 195px;
}

/* Vertical scrollbar */
.vscroll {
  width: 20px;
  display: flex;
  flex-direction: column;
  padding: 2px 2px 0;
}

.vs-btn {
  height: 16px;
  flex: none;
  display: flex;
  align-items: center;
  justify-content: center;
  background: #fff;
  border: 1px solid #ababab;
}

.vs-track {
  flex: 1;
  padding: 1px 0 0;
}

.vs-thumb {
  height: 152px;
  background: #fff;
  border: 1px solid #ababab;
}

.up {
  border-left: 4px solid transparent;
  border-right: 4px solid transparent;
  border-bottom: 4px solid #666;
}

.down {
  border-left: 4px solid transparent;
  border-right: 4px solid transparent;
  border-top: 4px solid #666;
}

.left {
  border-top: 4px solid transparent;
  border-bottom: 4px solid transparent;
  border-right: 4px solid #666;
}

.right {
  border-top: 4px solid transparent;
  border-bottom: 4px solid transparent;
  border-left: 4px solid #666;
}

/* Sheet tabs */
.tabbar {
  height: 27px;
  flex: none;
  display: flex;
  align-items: flex-start;
  background: #e6e6e6;
}

.sheet-nav {
  width: 100px;
  height: 24px;
  display: flex;
  align-items: center;
  gap: 24px;
  padding-left: 27px;
}

.sheet-nav i {
  border-right-color: #c0c0c0;
  border-left-color: #c0c0c0;
}

.sheet-tab {
  width: 73px;
  height: 24px;
  margin-top: -1px;
  background: #fff;
  border-bottom: 2px solid #217346;
  color: #3a7a5c;
  font-family: "Liberation Sans", sans-serif;
  font-size: 13.500px;
  letter-spacing: .3px;
  text-align: center;
  line-height: 26px;
}

.sheet-add {
  width: 32px;
  margin-left: 33px;
  height: 24px;
  display: flex;
  align-items: center;
}

.h-dots {
  margin-left: 579px;
  width: 16px;
  height: 24px;
  line-height: 24px;
  color: #999;
  text-align: center;
}

.hscroll {
  width: 511px;
  height: 16px;
  margin: 4px 0 0 2px;
  display: flex;
}

.hs-btn {
  width: 15px;
  flex: none;
  display: flex;
  align-items: center;
  justify-content: center;
  background: #fff;
  border: 1px solid #ababab;
}

.hs-track {
  flex: 1;
  padding-right: 37px;
  background: #e0e0e0;
}

.hs-thumb {
  height: 100%;
  background: #fff;
  border: 1px solid #ababab;
}

/* Status bar */
.status {
  height: 22px;
  flex: none;
  display: flex;
  align-items: center;
  background: #f1f1f1;
  font-feature-settings: "palt";
}

.ready {
  width: 75px;
  padding-left: 7px;
  flex: none;
}

.views {
  margin-left: auto;
  display: flex;
  height: 22px;
}

.view {
  width: 38px;
  display: flex;
  align-items: center;
  justify-content: center;
}

.view-on {
  background: #c5c5c5;
}

.zoom-ctl {
  width: 122px;
  margin-left: 4px;
  display: flex;
  align-items: center;
  gap: 3px;
}

.z-minus {
  width: 7px;
  height: 2px;
  margin-right: 1px;
  background: #666;
}

.z-track {
  width: 100px;
  height: 1px;
  background: #999;
  position: relative;
}

.z-knob {
  position: absolute;
  left: 47px;
  top: -5px;
  width: 5px;
  height: 11px;
  background: #777;
}

.z-plus {
  width: 8px;
  height: 8px;
  background:
    linear-gradient(#666, #666) center / 8px 2px no-repeat,
    linear-gradient(#666, #666) center / 2px 8px no-repeat;
}

.zoom-val {
  width: 41px;
  margin-left: 11px;
  font-size: 13px;
  color: #555;
}
```
